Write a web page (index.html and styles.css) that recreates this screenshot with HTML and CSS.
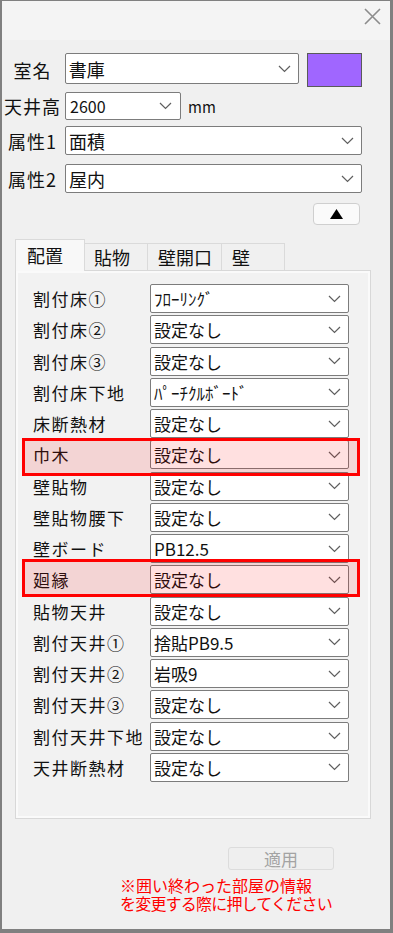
FILE: index.html
```html
<!DOCTYPE html>
<html>
<head>
    <meta charset="UTF-8">
    <meta name="viewport" content="width=device-width, initial-scale=1.0">
    <title>部屋の設定</title>
    <link rel="stylesheet" href="styles.css">
</head>
<body>
    <div class="window">
        <div class="titlebar">
            <svg class="close" width="17" height="17" viewBox="0 0 17 17"><path d="M1 1 L16 16 M16 1 L1 16" stroke="#8c8c8c" stroke-width="1.6" fill="none"/></svg>
        </div>

        <div class="head">
            <div class="row row-name">
                <span class="lbl">室名</span>
                <div class="combo combo-name"><span>書庫</span><svg class="chev" width="13" height="8" viewBox="0 0 13 8"><path d="M1 1 L6.5 6.5 L12 1" stroke="#5f5f5f" stroke-width="1.2" fill="none"/></svg></div>
                <div class="swatch"></div>
            </div>
            <div class="row row-height">
                <span class="lbl">天井高</span>
                <div class="combo combo-height"><span class="num">2600</span><svg class="chev" width="13" height="8" viewBox="0 0 13 8"><path d="M1 1 L6.5 6.5 L12 1" stroke="#5f5f5f" stroke-width="1.2" fill="none"/></svg></div>
                <span class="unit">mm</span>
            </div>
            <div class="row row-attr1">
                <span class="lbl">属性1</span>
                <div class="combo combo-full"><span>面積</span><svg class="chev" width="13" height="8" viewBox="0 0 13 8"><path d="M1 1 L6.5 6.5 L12 1" stroke="#5f5f5f" stroke-width="1.2" fill="none"/></svg></div>
            </div>
            <div class="row row-attr2">
                <span class="lbl">属性2</span>
                <div class="combo combo-full"><span>屋内</span><svg class="chev" width="13" height="8" viewBox="0 0 13 8"><path d="M1 1 L6.5 6.5 L12 1" stroke="#5f5f5f" stroke-width="1.2" fill="none"/></svg></div>
            </div>
            <div class="toggle-row">
                <button class="collapse"><svg width="13" height="10" viewBox="0 0 13 10"><polygon points="6.5,0 13,10 0,10" fill="#000"/></svg></button>
            </div>
        </div>

        <div class="tabs">
            <div class="tab tab-active">配置</div>
            <div class="tab tab-2">貼物</div>
            <div class="tab tab-3">壁開口</div>
            <div class="tab tab-4">壁</div>
        </div>

        <div class="panel" id="panel"></div>

        <div class="footer">
            <button class="apply" disabled>適用</button>
            <p class="note"><span class="note-line">※囲い終わった部屋の情報</span><span class="note-line">を変更する際に押してください</span></p>
        </div>

        <div class="mark mark-1"></div>
        <div class="mark mark-2"></div>
    </div>

    <script>
        // 配置タブの行
        var rows = [
            ['割付床①', 'ﾌﾛｰﾘﾝｸﾞ'],
            ['割付床②', '設定なし'],
            ['割付床③', '設定なし'],
            ['割付床下地', 'ﾊﾟｰﾁｸﾙﾎﾞｰﾄﾞ'],
            ['床断熱材', '設定なし'],
            ['巾木', '設定なし'],
            ['壁貼物', '設定なし'],
            ['壁貼物腰下', '設定なし'],
            ['壁ボード', 'PB12.5'],
            ['廻縁', '設定なし'],
            ['貼物天井', '設定なし'],
            ['割付天井①', '捨貼PB9.5'],
            ['割付天井②', '岩吸9'],
            ['割付天井③', '設定なし'],
            ['割付天井下地', '設定なし'],
            ['天井断熱材', '設定なし']
        ];
        var chev = '<svg class="chev" width="13" height="8" viewBox="0 0 13 8"><path d="M1 1 L6.5 6.5 L12 1" stroke="#5f5f5f" stroke-width="1.2" fill="none"/></svg>';
        var html = '';
        for (var i = 0; i < rows.length; i++) {
            html += '<div class="prow"><span class="plbl">' + rows[i][0] + '</span>'
                + '<div class="combo pcombo"><span>' + rows[i][1] + '</span>' + chev + '</div></div>';
        }
        document.getElementById('panel').innerHTML = html;
    </script>
</body>
</html>
```

FILE: styles.css
```css
body {
    margin: 0;
    background: #ffffff;
    font-family: "Noto Sans CJK JP", "Noto Sans", sans-serif;
    color: #111;
}
.window {
    position: relative;
    width: 393px;
    height: 933px;
    box-sizing: border-box;
    border-style: solid;
    border-color: #808080;
    border-width: 1px 3px 4px 2px;
    background: #f0f0f0;
    display: flex;
    flex-direction: column;
}
.titlebar {
    height: 39px;
    background: #f4f4f4;
    display: flex;
    justify-content: flex-end;
    align-items: flex-start;
}
.close {
    margin-top: 7px;
    margin-right: 9px;
}

/* 上部 */
.head {
    padding-right: 28px;
}
.row {
    display: flex;
    align-items: center;
}
.lbl {
    width: 61px;
    margin-right: 2px;
    text-align: center;
    font-size: 18px;
    letter-spacing: 1px;
    line-height: 1;
    white-space: nowrap;
}
.combo {
    display: flex;
    align-items: center;
    justify-content: space-between;
    box-sizing: border-box;
    border: 1px solid #7c7c7c;
    border-radius: 2px;
    background: #ffffff;
    padding: 0 7px 0 3px;
    font-size: 18px;
    line-height: 1;
    white-space: nowrap;
}
.chev {
    flex: none;
}
.row-name {
    margin-top: 13px;
    height: 34px;
}
.combo-name {
    width: 235px;
    height: 31px;
    align-self: flex-start;
}
.swatch {
    width: 55px;
    height: 34px;
    box-sizing: border-box;
    margin-left: 8px;
    background: #a066ff;
    border: 1px solid #5a5a5a;
}
.row-height {
    margin-top: 5px;
    height: 28px;
}
.combo-height {
    width: 116px;
    height: 28px;
    padding-left: 4px;
    padding-right: 8px;
}
.num {
    font-size: 16px;
}
.unit {
    margin-left: 7px;
    font-size: 15px;
}
.row-attr1 {
    margin-top: 6px;
    height: 29px;
}
.row-attr2 {
    margin-top: 9px;
    height: 29px;
}
.combo-full {
    flex: 1;
    height: 29px;
}
.toggle-row {
    display: flex;
    justify-content: flex-end;
    margin-top: 10px;
}
.collapse {
    width: 47px;
    height: 22px;
    margin-right: 2px;
    padding: 0;
    border: 1px solid #cfcfcf;
    border-radius: 4px;
    background: #fafafa;
    display: flex;
    align-items: center;
    justify-content: center;
}

/* タブ */
.tabs {
    display: flex;
    align-items: flex-end;
    height: 31px;
    margin-top: 14px;
    margin-left: 13px;
}
.tab {
    box-sizing: border-box;
    height: 27px;
    padding-left: 9px;
    border: 1px solid #dadada;
    border-bottom: none;
    border-left: none;
    background: #f0f0f0;
    font-size: 18px;
    line-height: 1;
    display: flex;
    align-items: center;
}
.tab-active {
    position: relative;
    z-index: 1;
    width: 70px;
    height: 32px;
    margin-bottom: -1px;
    padding-left: 11px;
    padding-bottom: 1px;
    border-left: 1px solid #dadada;
    background: #f8f8f8;
}
.tab-2 {
    width: 63px;
}
.tab-3 {
    width: 74px;
    padding-left: 10px;
}
.tab-4 {
    width: 63px;
    padding-left: 10px;
}

/* 配置パネル */
.panel {
    box-sizing: border-box;
    width: 356px;
    height: 549px;
    margin-left: 13px;
    padding: 13px 0 0 17px;
    border: 1px solid #d8d8d8;
    box-shadow: inset 0 0 0 2px #fafafa;
    background: #f2f2f2;
    display: flex;
    flex-direction: column;
    gap: 2.27px;
}
.prow {
    display: flex;
    align-items: center;
    height: 29px;
}
.plbl {
    width: 117px;
    font-size: 17px;
    letter-spacing: 1.5px;
    line-height: 1;
    white-space: nowrap;
}
.pcombo {
    width: 199px;
    height: 29px;
    font-size: 17px;
}

/* 下部 */
.footer {
    display: flex;
    flex-direction: column;
}
.apply {
    width: 106px;
    height: 23px;
    margin: 28px 0 0 226px;
    padding: 0;
    border: 1px solid #dcdcdc;
    border-radius: 3px;
    background: #efefef;
    color: #a3a3a3;
    font-family: inherit;
    font-size: 17px;
    line-height: 1;
}
.note {
    display: flex;
    flex-direction: column;
    margin: 8px 0 0 118px;
    color: #ff0000;
    font-family: "Liberation Sans", "Noto Sans CJK JP", sans-serif;
    font-size: 16px;
    line-height: 18px;
    white-space: nowrap;
}
.note-line {
    display: block;
    height: 18px;
}
.note-line + .note-line {
    letter-spacing: -0.8px;
}

/* 赤枠の注記 */
.mark {
    position: absolute;
    left: 20px;
    width: 338px;
    height: 38px;
    box-sizing: border-box;
    border: 3px solid #ff0000;
    background: rgba(255, 0, 0, 0.12);
}
.mark-1 {
    top: 437px;
}
.mark-2 {
    top: 558px;
}
```
